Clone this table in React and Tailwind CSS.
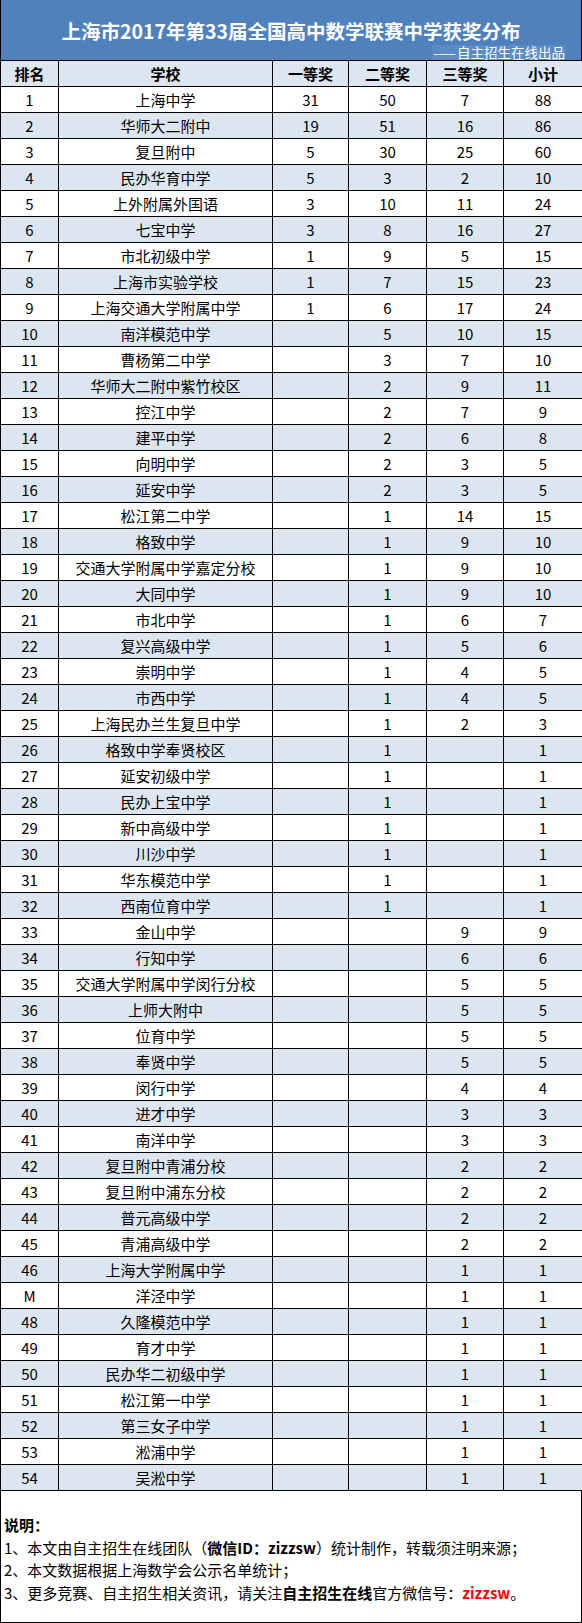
import React from "react";

const rows = [
  ["1", "上海中学", "31", "50", "7", "88"],
  ["2", "华师大二附中", "19", "51", "16", "86"],
  ["3", "复旦附中", "5", "30", "25", "60"],
  ["4", "民办华育中学", "5", "3", "2", "10"],
  ["5", "上外附属外国语", "3", "10", "11", "24"],
  ["6", "七宝中学", "3", "8", "16", "27"],
  ["7", "市北初级中学", "1", "9", "5", "15"],
  ["8", "上海市实验学校", "1", "7", "15", "23"],
  ["9", "上海交通大学附属中学", "1", "6", "17", "24"],
  ["10", "南洋模范中学", "", "5", "10", "15"],
  ["11", "曹杨第二中学", "", "3", "7", "10"],
  ["12", "华师大二附中紫竹校区", "", "2", "9", "11"],
  ["13", "控江中学", "", "2", "7", "9"],
  ["14", "建平中学", "", "2", "6", "8"],
  ["15", "向明中学", "", "2", "3", "5"],
  ["16", "延安中学", "", "2", "3", "5"],
  ["17", "松江第二中学", "", "1", "14", "15"],
  ["18", "格致中学", "", "1", "9", "10"],
  ["19", "交通大学附属中学嘉定分校", "", "1", "9", "10"],
  ["20", "大同中学", "", "1", "9", "10"],
  ["21", "市北中学", "", "1", "6", "7"],
  ["22", "复兴高级中学", "", "1", "5", "6"],
  ["23", "崇明中学", "", "1", "4", "5"],
  ["24", "市西中学", "", "1", "4", "5"],
  ["25", "上海民办兰生复旦中学", "", "1", "2", "3"],
  ["26", "格致中学奉贤校区", "", "1", "", "1"],
  ["27", "延安初级中学", "", "1", "", "1"],
  ["28", "民办上宝中学", "", "1", "", "1"],
  ["29", "新中高级中学", "", "1", "", "1"],
  ["30", "川沙中学", "", "1", "", "1"],
  ["31", "华东模范中学", "", "1", "", "1"],
  ["32", "西南位育中学", "", "1", "", "1"],
  ["33", "金山中学", "", "", "9", "9"],
  ["34", "行知中学", "", "", "6", "6"],
  ["35", "交通大学附属中学闵行分校", "", "", "5", "5"],
  ["36", "上师大附中", "", "", "5", "5"],
  ["37", "位育中学", "", "", "5", "5"],
  ["38", "奉贤中学", "", "", "5", "5"],
  ["39", "闵行中学", "", "", "4", "4"],
  ["40", "进才中学", "", "", "3", "3"],
  ["41", "南洋中学", "", "", "3", "3"],
  ["42", "复旦附中青浦分校", "", "", "2", "2"],
  ["43", "复旦附中浦东分校", "", "", "2", "2"],
  ["44", "普元高级中学", "", "", "2", "2"],
  ["45", "青浦高级中学", "", "", "2", "2"],
  ["46", "上海大学附属中学", "", "", "1", "1"],
  ["M", "洋泾中学", "", "", "1", "1"],
  ["48", "久隆模范中学", "", "", "1", "1"],
  ["49", "育才中学", "", "", "1", "1"],
  ["50", "民办华二初级中学", "", "", "1", "1"],
  ["51", "松江第一中学", "", "", "1", "1"],
  ["52", "第三女子中学", "", "", "1", "1"],
  ["53", "淞浦中学", "", "", "1", "1"],
  ["54", "吴淞中学", "", "", "1", "1"],
];

const heads = ["排名", "学校", "一等奖", "二等奖", "三等奖", "小计"];

const App = () => {
  return (
    <div className="w-[582px] h-[1623px] bg-white font-['Noto_Sans_CJK_SC',sans-serif] text-black">
      <div className="h-[60px] bg-[#4f81bd] border-x border-black flex flex-col">
        <p className="pt-[19px] text-center text-white font-bold text-[19.5px] leading-[24px]">
          上海市2017年第33届全国高中数学联赛中学获奖分布
        </p>
        <div className="flex justify-end pr-[15px] pt-[2px]">
          <span className="bg-[#5a8bc6] text-white text-[13.5px] leading-[15px] h-[15px] px-[1px]">
            <span className="tracking-[1px]">——</span>自主招生在线出品
          </span>
        </div>
      </div>
      <table className="w-[582px] border-collapse table-fixed text-[15px]">
        <colgroup>
          <col className="w-[58px]" />
          <col className="w-[214px]" />
          <col className="w-[76px]" />
          <col className="w-[78px]" />
          <col className="w-[77px]" />
          <col className="w-[79px]" />
        </colgroup>
        <thead>
          <tr className="h-[26px] bg-[#dce6f1]">
            {heads.map((h) => (
              <th
                key={h}
                className="border border-black font-bold text-center align-middle leading-none p-0"
              >
                {h}
              </th>
            ))}
          </tr>
        </thead>
        <tbody>
          {rows.map((row, i) => (
            <tr
              key={i}
              className={i % 2 === 1 ? "h-[26px] bg-[#dce6f1]" : "h-[26px] bg-white"}
            >
              {row.map((cell, j) => (
                <td
                  key={j}
                  className="border border-black text-center align-middle leading-none p-0"
                >
                  {cell}
                </td>
              ))}
            </tr>
          ))}
        </tbody>
      </table>
      <div className="border-x border-b border-black pt-[23px] pb-[18px] pl-[3px] text-[15px] leading-[22.5px]">
        <p className="font-bold">说明：</p>
        <p>
          1、本文由自主招生在线团队（<span className="font-bold">微信ID：zizzsw</span>）统计制作，转载须注明来源；
        </p>
        <p>2、本文数据根据上海数学会公示名单统计；</p>
        <p>
          3、更多竞赛、自主招生相关资讯，请关注<span className="font-bold">自主招生在线</span>官方微信号：
          <span className="font-bold text-[#ff0000]">zizzsw</span>。
        </p>
      </div>
    </div>
  );
};

export default App;
